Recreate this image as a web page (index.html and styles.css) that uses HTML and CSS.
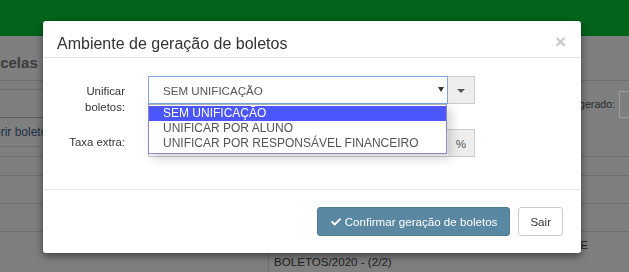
FILE: index.html
```html
<!DOCTYPE html>
<html lang="pt-BR">
<head>
    <meta charset="UTF-8">
    <meta name="viewport" content="width=device-width, initial-scale=1.0">
    <title>Geração de boletos</title>
    <link rel="stylesheet" href="styles.css">
</head>
<body>
    <div class="page">
        <header class="topbar"></header>
        <div class="panel-heading">
            <h3>Parcelas</h3>
        </div>
        <div class="toolbar">
            <div class="toolbar-left">
                <div class="tl-row tl-thin"></div>
                <div class="tl-row tl-mid"></div>
                <div class="tl-row tl-link"><a href="#">Abrir boletos</a></div>
                <div class="tl-row tl-thin"></div>
            </div>
            <div class="toolbar-right">
                <label for="ultimo">Último gerado:</label>
                <input type="text" id="ultimo" class="filter-input">
            </div>
        </div>
        <div class="grid-row row-sm"><div class="cell-a"></div><div class="cell-b"></div></div>
        <div class="grid-row"><div class="cell-a"></div><div class="cell-b"></div></div>
        <div class="grid-row"><div class="cell-a"></div><div class="cell-b"></div></div>
        <div class="grid-row row-last">
            <div class="cell-a"></div>
            <div class="cell-b">
                <span class="cell-line right">PARCELA GERADA PELO AMBIENTE DE</span>
                <span class="cell-line">BOLETOS/2020 - (2/2)</span>
            </div>
        </div>
    </div>

    <div class="modal">
        <div class="modal-header">
            <h4 class="modal-title">Ambiente de geração de boletos</h4>
            <button type="button" class="close">&times;</button>
        </div>
        <div class="modal-body">
            <div class="form-row">
                <label class="control-label">Unificar boletos:</label>
                <div class="input-group">
                    <div class="select">
                        <span>SEM UNIFICAÇÃO</span>
                        <i class="select-arrow"></i>
                        <ul class="options">
                            <li class="selected">SEM UNIFICAÇÃO</li>
                            <li>UNIFICAR POR ALUNO</li>
                            <li>UNIFICAR POR RESPONSÁVEL FINANCEIRO</li>
                        </ul>
                    </div>
                    <span class="addon"><i class="caret"></i></span>
                </div>
            </div>
            <div class="form-row">
                <label class="control-label single">Taxa extra:</label>
                <div class="input-group">
                    <input type="text" class="form-control">
                    <span class="addon">%</span>
                </div>
            </div>
        </div>
        <div class="modal-footer">
            <button type="button" class="btn btn-primary">
                <svg class="icon" viewBox="0 0 512 512"><path d="M173.9 439.4l-166.4-166.4c-10-10-10-26.2 0-36.2l36.2-36.2c10-10 26.2-10 36.2 0L192 312.7 432.1 72.6c10-10 26.2-10 36.2 0l36.2 36.2c10 10 10 26.2 0 36.2l-294.4 294.4c-10 10-26.2 10-36.2 0z" fill="#fff"/></svg>
                Confirmar geração de boletos
            </button>
            <button type="button" class="btn btn-default">Sair</button>
        </div>
    </div>
</body>
</html>
```

FILE: styles.css
```css
body {
    margin: 0;
    font-family: "Liberation Sans", Arial, sans-serif;
    background-color: #7f7f7f;
    overflow: hidden;
}
.page {
    width: 629px;
    height: 272px;
}
.topbar {
    height: 36px;
    background-color: #02641a;
}
.panel-heading {
    height: 44px;
    border-bottom: 1px solid #6e6e6e;
}
.panel-heading h3 {
    margin: 0;
    padding-top: 18px;
    margin-left: -24px;
    font-size: 15px;
    line-height: 18px;
    color: #3c3c3c;
}
.toolbar {
    display: flex;
    height: 75px;
    border-bottom: 1px solid #6e6e6e;
}
.toolbar-left {
    width: 268px;
}
.tl-row {
    border-bottom: 1px solid #6e6e6e;
}
.tl-thin {
    height: 8px;
}
.tl-mid {
    height: 27px;
    border-bottom-color: #5e5e5e;
}
.tl-link {
    height: 28px;
    display: flex;
    align-items: center;
}
.tl-link a {
    margin-left: -14px;
    font-size: 12px;
    color: #1b2f45;
    text-decoration: none;
}
.toolbar-left .tl-row:last-child {
    border-bottom: none;
}
.toolbar-right {
    flex: 1;
    display: flex;
    justify-content: flex-end;
    align-items: flex-start;
    padding-top: 10px;
}
.toolbar-right label {
    font-size: 10.6px;
    color: #2a2a2a;
    line-height: 27px;
    margin-right: 4px;
}
.filter-input {
    width: 40px;
    height: 25px;
    margin: 0 -32px 0 0;
    padding: 0;
    border: 1px solid #9b9b9b;
    background-color: #7f7f7f;
}
.grid-row {
    display: flex;
    height: 27px;
    border-bottom: 1px solid #6e6e6e;
}
.grid-row.row-sm {
    height: 18px;
}
.grid-row.row-last {
    height: 40px;
    border-bottom: none;
}
.cell-a {
    width: 268px;
}
.cell-b {
    flex: 1;
    border-left: 1px solid #6e6e6e;
    padding: 4px 6px 0 5px;
}
.cell-line {
    display: block;
    width: 314px;
    font-size: 11.6px;
    line-height: 17px;
    color: #1e1e1e;
    white-space: nowrap;
}
.cell-line.right {
    text-align: right;
}

/* modal */
.modal {
    position: fixed;
    left: 43px;
    top: 21px;
    width: 538px;
    background-color: #fff;
    border-radius: 3px;
    box-shadow: 0 3px 9px rgba(0, 0, 0, 0.5);
}
.modal-header {
    display: flex;
    justify-content: space-between;
    align-items: flex-start;
    padding: 12px 15px 2px 14px;
    border-bottom: 1px solid #e5e5e5;
}
.modal-title {
    margin: 0;
    font-size: 16px;
    font-weight: normal;
    line-height: 22px;
    color: #333;
}
.close {
    margin-top: -2px;
    padding: 0;
    border: none;
    background: none;
    font-family: "Liberation Sans", Arial, sans-serif;
    font-size: 19px;
    font-weight: bold;
    line-height: 22px;
    color: #c8c8c8;
}
.modal-body {
    display: flex;
    flex-direction: column;
    gap: 25px;
    padding: 18px 15px 32px;
}
.form-row {
    display: grid;
    grid-template-columns: 67px 327px;
    grid-template-rows: 28px;
    column-gap: 23px;
    height: 28px;
}
.control-label {
    text-align: right;
    font-size: 11.4px;
    line-height: 16px;
    color: #333;
    padding-top: 7px;
}
.control-label.single {
    padding-top: 5px;
}
.input-group {
    display: flex;
    height: 28px;
}
.select {
    position: relative;
    flex: 1;
    display: flex;
    align-items: center;
    justify-content: space-between;
    border: 1px solid #7aa9e6;
    padding: 0 3px 0 14px;
    font-size: 11.6px;
    color: #555;
}
.select-arrow {
    width: 0;
    height: 0;
    border-left: 3px solid transparent;
    border-right: 3px solid transparent;
    border-top: 5px solid #333;
    margin-top: -1px;
}
.options {
    position: absolute;
    left: -1px;
    top: 27px;
    width: 297px;
    margin: 0;
    padding: 1px 0 2px;
    list-style: none;
    background-color: #fff;
    border: 1px solid #8e86c9;
    border-top-color: #b0b0b0;
    box-shadow: 4px 4px 10px rgba(0, 0, 0, 0.18);
    z-index: 2;
}
.options li {
    height: 15px;
    line-height: 15px;
    padding-left: 14px;
    font-size: 12px;
    color: #555;
}
.options li.selected {
    background-color: #4b56fd;
    color: #fff;
}
.form-control {
    flex: 1;
    margin: 0;
    border: 1px solid #ccc;
    border-right: none;
}
.addon {
    width: 26px;
    display: flex;
    align-items: center;
    justify-content: center;
    background-color: #eee;
    border: 1px solid #ccc;
    border-left: none;
    font-size: 11.6px;
    color: #555;
}
.caret {
    width: 0;
    height: 0;
    border-left: 4px solid transparent;
    border-right: 4px solid transparent;
    border-top: 4px solid #555;
    margin-top: 1px;
}
.modal-footer {
    display: flex;
    justify-content: flex-end;
    gap: 8px;
    padding: 17px 18px 17px;
    border-top: 1px solid #e5e5e5;
}
.btn {
    height: 29px;
    display: flex;
    align-items: center;
    border-radius: 3px;
    font-family: "Liberation Sans", Arial, sans-serif;
    font-size: 11.6px;
}
.btn-primary {
    padding: 0 12px 0 13px;
    background-color: #5a87a1;
    border: 1px solid #527c94;
    color: #fff;
}
.btn-default {
    padding: 0 11px;
    background-color: #fff;
    border: 1px solid #ccc;
    color: #333;
}
.icon {
    width: 10px;
    height: 10px;
    margin-right: 4px;
}
```
